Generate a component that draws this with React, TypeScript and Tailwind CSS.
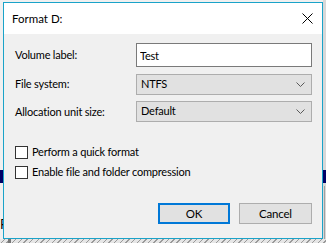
import React, { useState } from 'react';

const Chevron = () => (
  <svg width="9" height="5" viewBox="0 0 9 5" className="shrink-0">
    <path d="M0.5 0.5 L4.5 4.5 L8.5 0.5" fill="none" stroke="#5a5a5a" strokeWidth="1" />
  </svg>
);

const Check = ({ label }: { label: string }) => {
  const [on, setOn] = useState(false);
  return (
    <label className="flex items-center gap-[4px] h-[13px] cursor-default">
      <input
        type="checkbox"
        checked={on}
        onChange={(e) => setOn(e.target.checked)}
        className="appearance-none w-[13px] h-[13px] border border-[#333] bg-white m-0 shrink-0"
      />
      <span>{label}</span>
    </label>
  );
};

export default function App() {
  const [volume, setVolume] = useState('Test');

  return (
    <div
      className="relative w-[326px] h-[243px] overflow-hidden bg-[#f0f0f0] text-[11px] tracking-[-0.2px] text-black"
      style={{ fontFamily: 'Lato, "Noto Sans", sans-serif' }}
    >
      {/* window behind the dialog */}
      <div className="absolute left-0 top-[170px] w-[3px] h-[13px] bg-[#000066]" />
      <div className="absolute left-0 top-[218px] text-[13px] leading-none">F</div>
      <div className="absolute right-0 top-0 w-[3px] h-[243px] bg-[#d8d8d8]" />
      <div className="absolute right-0 top-[170px] w-[3px] h-[13px] bg-[#000066]" />
      <div className="absolute right-[1px] top-[186px] w-px h-[57px] bg-[#a0a0a0]" />
      <div
        className="absolute left-0 bottom-0 w-[326px] h-[4px] bg-[#e6e6e6]"
        style={{ backgroundImage: 'repeating-linear-gradient(135deg, #e6e6e6 0 3px, #9a9a9a 3px 4px)' }}
      />
      <div className="absolute left-[8px] bottom-0 w-[3px] h-[4px] bg-[#777]" />

      <div className="relative ml-[3px] mt-[2px] w-[320px] h-[237px] border border-[#1aa3c9] bg-[#f0f0f0] flex flex-col">
        <div className="h-[31px] bg-white flex items-center justify-between pl-[8px] pr-[9px]">
          <span className="text-[11.5px] tracking-normal">Format D:</span>
          <svg width="11" height="11" viewBox="0 0 11 11">
            <path d="M0.5 0.5 L10.5 10.5 M10.5 0.5 L0.5 10.5" stroke="#000" strokeWidth="1" />
          </svg>
        </div>

        <div className="flex-1 flex flex-col pl-[11px] pr-[10px] pt-[9px]">
          <div className="grid grid-cols-[121px_1fr] items-center gap-y-[7px]">
            <span>Volume label:</span>
            <input
              value={volume}
              onChange={(e) => setVolume(e.target.value)}
              className="h-[24px] border border-[#7a7a7a] bg-white px-[3px] outline-none text-[11px] tracking-[-0.2px]"
            />
            <span>File system:</span>
            <div className="h-[21px] border border-[#adadad] bg-[#e1e1e1] flex items-center justify-between pl-[4px] pr-[6px]">
              <span>NTFS</span>
              <Chevron />
            </div>
            <span>Allocation unit size:</span>
            <div className="h-[21px] -mt-[1px] border border-[#adadad] bg-[#e1e1e1] flex items-center justify-between pl-[4px] pr-[6px]">
              <span>Default</span>
              <Chevron />
            </div>
          </div>

          <div className="mt-[24px] flex flex-col gap-[7px]">
            <Check label="Perform a quick format" />
            <Check label="Enable file and folder compression" />
          </div>

          <div className="mt-[24px] flex justify-end gap-[9px]">
            <button className="w-[72px] h-[21px] border-2 border-[#0078d7] bg-[#e1e1e1] text-[11.5px] leading-none">
              OK
            </button>
            <button className="w-[73px] h-[21px] border border-[#adadad] bg-[#e1e1e1] text-[11.5px] leading-none">
              Cancel
            </button>
          </div>
        </div>
      </div>
    </div>
  );
}
